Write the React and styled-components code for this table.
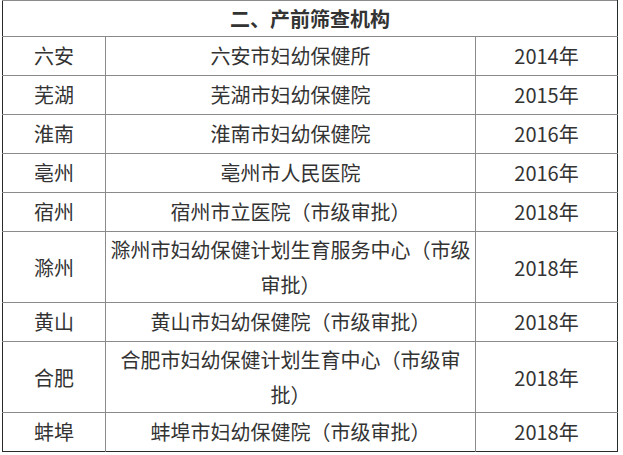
import React from 'react';
import styled, { createGlobalStyle } from 'styled-components';

const GlobalStyle = createGlobalStyle`
  html, body {
    margin: 0;
    padding: 0;
    background: #ffffff;
  }
`;

const Page = styled.div`
  padding: 0 0 0 2px;
  font-family: "Noto Sans CJK SC", "Noto Sans", sans-serif;
  color: #333333;
`;

const Table = styled.table`
  width: 615px;
  table-layout: fixed;
  border-collapse: collapse;
  border-top: 1px solid #8a8a8a;
  border-left: 1px solid #2a2a2a;
  border-right: 1px solid #2a2a2a;
  border-bottom: 1px solid #2a2a2a;
  font-size: 20px;
`;

const HeadCell = styled.th`
  height: 35px;
  padding: 0;
  line-height: 35px;
  font-weight: bold;
  text-align: center;
  border-bottom: 1px solid #8a8a8a;
`;

const Cell = styled.td`
  padding: ${(p) => (p.$tight ? '0 4px' : '2px 4px')};
  line-height: ${(p) => (p.$tight ? '35px' : '34px')};
  text-align: center;
  vertical-align: middle;
  border: 1px solid #8a8a8a;
  &:first-child { border-left: none; }
  &:last-child { border-right: none; }
`;

const Row = styled.tr`
  &:last-child td { border-bottom: none; }
`;

const rows = [
  ['六安', '六安市妇幼保健所', '2014年'],
  ['芜湖', '芜湖市妇幼保健院', '2015年'],
  ['淮南', '淮南市妇幼保健院', '2016年'],
  ['亳州', '亳州市人民医院', '2016年'],
  ['宿州', '宿州市立医院（市级审批）', '2018年'],
  ['滁州', '滁州市妇幼保健计划生育服务中心（市级审批）', '2018年', true],
  ['黄山', '黄山市妇幼保健院（市级审批）', '2018年'],
  ['合肥', '合肥市妇幼保健计划生育中心（市级审批）', '2018年', true],
  ['蚌埠', '蚌埠市妇幼保健院（市级审批）', '2018年'],
];

export default function App() {
  return (
    <>
      <GlobalStyle />
      <Page>
        <Table>
          <colgroup>
            <col style={{ width: 103 }} />
            <col style={{ width: 370 }} />
            <col style={{ width: 142 }} />
          </colgroup>
          <thead>
            <tr>
              <HeadCell colSpan={3}>二、产前筛查机构</HeadCell>
            </tr>
          </thead>
          <tbody>
            {rows.map(([city, org, year, tight]) => (
              <Row key={city}>
                <Cell $tight={tight}>{city}</Cell>
                <Cell $tight={tight}>{org}</Cell>
                <Cell $tight={tight}>{year}</Cell>
              </Row>
            ))}
          </tbody>
        </Table>
      </Page>
    </>
  );
}
